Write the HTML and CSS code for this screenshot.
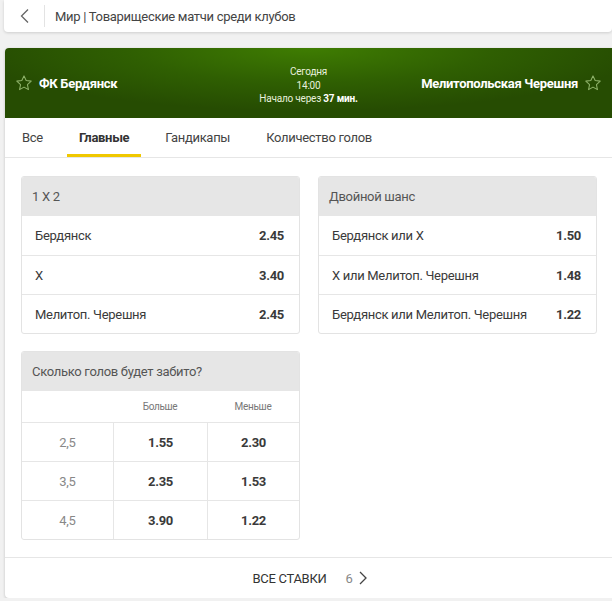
FILE: index.html
```html
<!DOCTYPE html>
<html lang="ru">
<head>
<meta charset="utf-8">
<link rel="stylesheet" href="styles.css">
</head>
<body>
<div class="topbar">
  <span class="back"><svg width="12" height="16" viewBox="0 0 12 16"><path d="M9 1.5 L2.5 8 L9 14.5" fill="none" stroke="#666" stroke-width="1.3"/></svg></span>
  <span class="sep"></span>
  <span class="crumb">Мир | Товарищеские матчи среди клубов</span>
</div>
<div class="card">
  <div class="match">
    <div class="team">
      <svg class="star" width="18" height="18" viewBox="0 0 24 24"><path d="M12 2.5l2.9 6.2 6.7.8-5 4.6 1.3 6.7L12 17.5l-5.9 3.3 1.3-6.7-5-4.6 6.7-.8z" fill="none" stroke="#8fb36a" stroke-width="1.4" stroke-linejoin="round"/></svg>
      <span class="name">ФК Бердянск</span>
    </div>
    <div class="info">
      <div>Сегодня</div>
      <div>14:00</div>
      <div>Начало через <b>37 мин.</b></div>
    </div>
    <div class="team right">
      <span class="name">Мелитопольская Черешня</span>
      <svg class="star" width="18" height="18" viewBox="0 0 24 24"><path d="M12 2.5l2.9 6.2 6.7.8-5 4.6 1.3 6.7L12 17.5l-5.9 3.3 1.3-6.7-5-4.6 6.7-.8z" fill="none" stroke="#8fb36a" stroke-width="1.4" stroke-linejoin="round"/></svg>
    </div>
  </div>
  <div class="tabs">
    <span class="tab">Все</span>
    <span class="tab active">Главные</span>
    <span class="tab">Гандикапы</span>
    <span class="tab">Количество голов</span>
  </div>
  <div class="markets">
    <div class="box">
      <div class="box-title">1 X 2</div>
      <div class="row"><span>Бердянск</span><b>2.45</b></div>
      <div class="row"><span>X</span><b>3.40</b></div>
      <div class="row"><span>Мелитоп. Черешня</span><b>2.45</b></div>
    </div>
    <div class="box">
      <div class="box-title">Двойной шанс</div>
      <div class="row"><span>Бердянск или X</span><b>1.50</b></div>
      <div class="row"><span>X или Мелитоп. Черешня</span><b>1.48</b></div>
      <div class="row"><span>Бердянск или Мелитоп. Черешня</span><b>1.22</b></div>
    </div>
    <div class="box">
      <div class="box-title">Сколько голов будет забито?</div>
      <div class="grid head"><span></span><span>Больше</span><span>Меньше</span></div>
      <div class="grid"><span class="line">2,5</span><b>1.55</b><b>2.30</b></div>
      <div class="grid"><span class="line">3,5</span><b>2.35</b><b>1.53</b></div>
      <div class="grid"><span class="line">4,5</span><b>3.90</b><b>1.22</b></div>
    </div>
  </div>
  <div class="footer">
    <span class="all">ВСЕ СТАВКИ</span>
    <span class="count">6</span>
    <svg width="10" height="16" viewBox="0 0 10 16"><path d="M2 2 L8 8 L2 14" fill="none" stroke="#444" stroke-width="1.3"/></svg>
  </div>
</div>
</body>
</html>
```
FILE: styles.css
```css
* { box-sizing: border-box; }
body {
  margin: 0;
  background: #f1f1f1;
  font-family: Roboto, "Noto Sans", sans-serif;
  color: #3a3a3a;
  font-size: 13px;
  letter-spacing: -0.3px;
}
.topbar {
  height: 32px;
  margin-left: 4px;
  background: #fff;
  border-radius: 0 0 4px 4px;
  box-shadow: 0 1px 3px rgba(0,0,0,0.15);
  display: flex;
  align-items: center;
}
.back { width: 40px; display: flex; justify-content: center; padding-left: 2px; }
.sep { width: 1px; height: 22px; background: #e3e3e3; margin-right: 10px; }
.crumb { font-size: 13px; color: #444; }
.card {
  margin: 16px 0 0 5px;
  background: #fff;
  border-radius: 4px 0 0 4px;
  box-shadow: 0 1px 3px rgba(0,0,0,0.2);
  overflow: hidden;
}
.match {
  height: 70px;
  background: radial-gradient(ellipse 55% 90% at 50% 0%, #3f7d02 0%, #2f5f02 55%, #264c02 100%);
  display: flex;
  align-items: center;
  padding: 0 10px;
  color: #fff;
}
.team { flex: 1; display: flex; align-items: center; gap: 6px; }
.team.right { justify-content: flex-end; }
.name { font-weight: 700; font-size: 13px; }
.info {
  font-size: 10px;
  line-height: 13.5px;
  text-align: center;
  color: #e8f0dc;
  padding-top: 5px;
  letter-spacing: -0.2px;
}
.info b { color: #fff; }
.tabs {
  height: 40px;
  display: flex;
  gap: 12px;
  padding-left: 5px;
  border-bottom: 1px solid #e6e6e6;
}
.tab {
  padding: 3px 12px 0;
  display: flex;
  align-items: center;
  color: #444;
  border-bottom: 3px solid transparent;
}
.tab.active { font-weight: 700; color: #333; border-bottom-color: #f0c800; }
.markets {
  display: grid;
  grid-template-columns: 1fr 1fr;
  gap: 17px 18px;
  padding: 18px 15px 17px 16px;
  align-items: start;
  border-bottom: 1px solid #e6e6e6;
}
.box {
  border: 1px solid #e3e3e3;
  border-radius: 3px;
  overflow: hidden;
}
.box-title {
  height: 39px;
  background: #e6e6e6;
  display: flex;
  align-items: center;
  padding: 0 10px;
  color: #555;
}
.row {
  height: 39px;
  display: flex;
  align-items: center;
  justify-content: space-between;
  padding: 0 15px 0 13px;
  border-top: 1px solid #e6e6e6;
}
.row:nth-child(2) { border-top: 0; }
.grid {
  display: grid;
  grid-template-columns: 91px 94px 1fr;
  height: 39px;
  border-top: 1px solid #e6e6e6;
}
.grid > * {
  display: flex;
  align-items: center;
  justify-content: center;
}
.grid > * + * { border-left: 1px solid #e6e6e6; }
.grid.head { height: 31px; border-top: 0; font-size: 10px; color: #777; }
.grid.head > * + * { border-left: 0; }
.line { color: #888; }
.footer {
  height: 40px;
  display: flex;
  align-items: center;
  justify-content: center;
  padding-left: 4px;
}
.all { color: #333; }
.count { color: #888; margin-left: 19px; margin-right: 6px; }
```
